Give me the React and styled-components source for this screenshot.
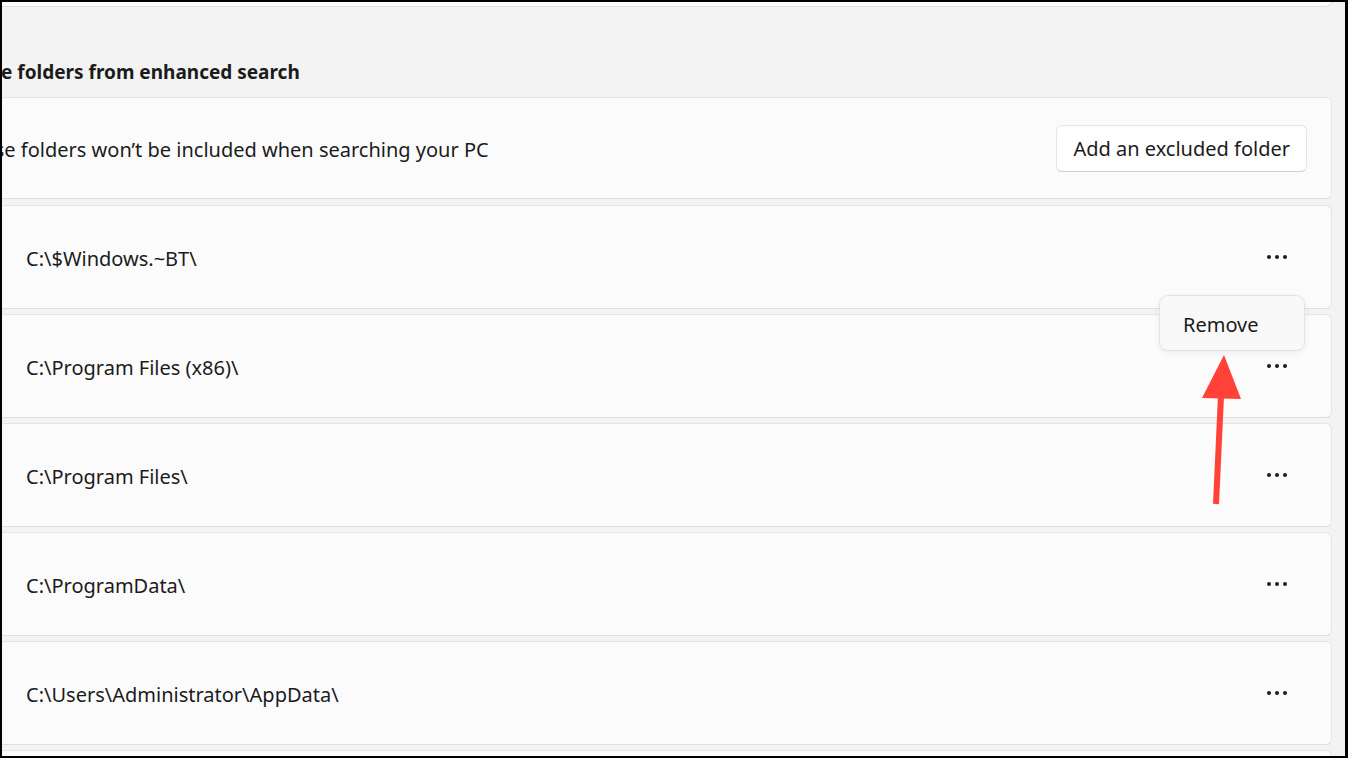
import React from "react";
import styled, { createGlobalStyle } from "styled-components";

const GlobalStyle = createGlobalStyle`
  html, body {
    margin: 0;
    padding: 0;
    background: #000;
  }
  * {
    box-sizing: border-box;
  }
`;

const FONT = `"Noto Sans", "Open Sans", "Liberation Sans", sans-serif`;

const Frame = styled.div`
  width: 1348px;
  height: 758px;
  border-style: solid;
  border-color: #000;
  border-width: 2px 3px 2px 2px;
  background: #000;
`;

const Viewport = styled.div`
  position: relative;
  width: 100%;
  height: 100%;
  overflow: hidden;
  background: #f3f3f3;
  font-family: ${FONT};
  color: #1b1b1b;
`;

const Column = styled.div`
  display: flex;
  flex-direction: column;
  margin-left: -70px;
  margin-right: 13px;
`;

const Card = styled.div`
  display: flex;
  align-items: center;
  justify-content: space-between;
  flex-shrink: 0;
  height: ${(p) => p.$height || 104}px;
  margin-top: ${(p) => p.$gap || 0}px;
  padding-left: ${(p) => p.$indent || 0}px;
  padding-right: ${(p) => p.$right || 0}px;
  background: #fbfbfb;
  border: 1px solid #e5e5e5;
  border-bottom-color: #dedede;
  border-radius: 6px;
`;

const TopCard = styled(Card)`
  margin-top: -45px;
  background: #fdfdfd;
`;

const SectionTitle = styled.h2`
  margin: 52px 0 0;
  padding-left: 8px;
  height: 26px;
  line-height: 26px;
  font-size: 19px;
  font-weight: 700;
  white-space: nowrap;
`;

const Description = styled.span`
  padding-top: 3px;
  font-size: 20px;
  white-space: nowrap;
`;

const PathText = styled.span`
  padding-top: 3px;
  font-size: 20px;
  white-space: nowrap;
`;

const SecondaryButton = styled.button`
  height: 47px;
  padding: 0 16px;
  font-family: ${FONT};
  font-size: 20px;
  color: #1b1b1b;
  background: #fefefe;
  border: 1px solid #e5e5e5;
  border-bottom-color: #cfcfcf;
  border-radius: 6px;
  white-space: nowrap;
`;

const MoreButton = styled.button`
  display: flex;
  align-items: center;
  justify-content: center;
  gap: 4px;
  width: 40px;
  height: 32px;
  padding: 0;
  background: transparent;
  border: none;
`;

const Dot = styled.span`
  width: 4px;
  height: 4px;
  border-radius: 50%;
  background: #1b1b1b;
`;

const Flyout = styled.div`
  position: absolute;
  left: 1157px;
  top: 293px;
  width: 146px;
  height: 56px;
  display: flex;
  align-items: center;
  padding: 3px 0 0 23px;
  background: #f9f9f9;
  border: 1px solid #e3e3e3;
  border-radius: 9px;
  box-shadow: 0 2px 6px rgba(0, 0, 0, 0.06);
  font-size: 20px;
`;

const Arrow = styled.svg`
  position: absolute;
  left: 1193px;
  top: 348px;
`;

const folders = [
  "C:\\$Windows.~BT\\",
  "C:\\Program Files (x86)\\",
  "C:\\Program Files\\",
  "C:\\ProgramData\\",
  "C:\\Users\\Administrator\\AppData\\",
  "C:\\Users\\Administrator\\MicrosoftEdgeBackups\\",
];

function More() {
  return (
    <MoreButton aria-label="More options">
      <Dot />
      <Dot />
      <Dot />
    </MoreButton>
  );
}

export default function App() {
  return (
    <Frame>
      <GlobalStyle />
      <Viewport>
        <Column>
          <TopCard $height={50} />
          <SectionTitle>Exclude folders from enhanced search</SectionTitle>
          <Card $height={102} $gap={12} $indent={27} $right={24}>
            <Description>
              These folders won’t be included when searching your PC
            </Description>
            <SecondaryButton>Add an excluded folder</SecondaryButton>
          </Card>
          {folders.map((path, i) => (
            <Card
              key={path}
              $height={104}
              $gap={i === 0 ? 6 : 5}
              $indent={93}
              $right={34}
            >
              <PathText>{path}</PathText>
              <More />
            </Card>
          ))}
        </Column>
        <Flyout>Remove</Flyout>
        <Arrow width="52" height="160" viewBox="0 0 52 160">
          <polygon points="29,5 7,48 46,49" fill="#ff4137" />
          <path
            d="M26 46 L21 154"
            stroke="#ff4137"
            strokeWidth="6"
            strokeLinecap="butt"
          />
        </Arrow>
      </Viewport>
    </Frame>
  );
}
